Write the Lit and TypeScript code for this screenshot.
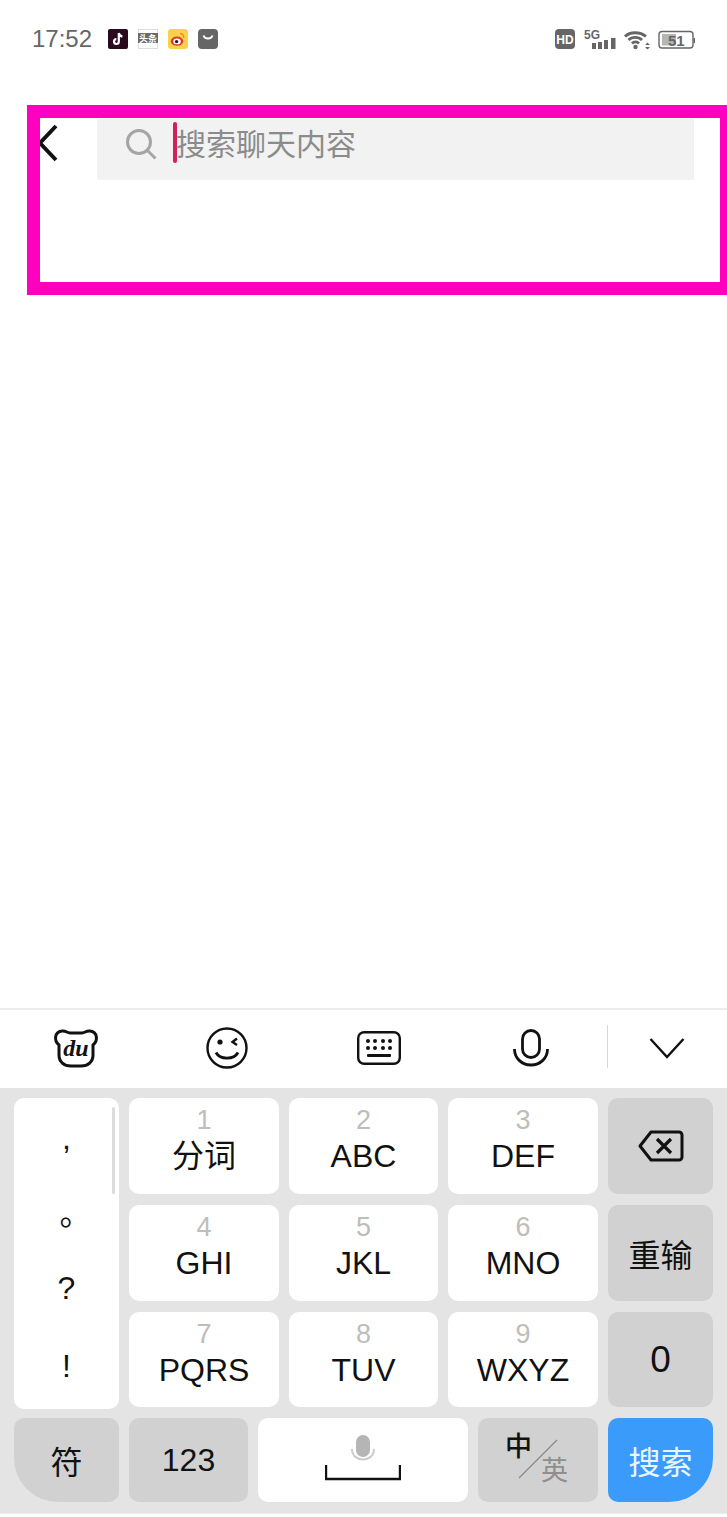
import { LitElement, html, css, svg } from "lit";
import { customElement } from "lit/decorators.js";

const letterKeys = [
  ["1", "分词"],
  ["2", "ABC"],
  ["3", "DEF"],
  ["4", "GHI"],
  ["5", "JKL"],
  ["6", "MNO"],
  ["7", "PQRS"],
  ["8", "TUV"],
  ["9", "WXYZ"],
];

@customElement("app-root")
export class AppRoot extends LitElement {
  static styles = css`
    :host {
      display: block;
      position: relative;
      width: 727px;
      height: 1517px;
      overflow: hidden;
      background: #fff;
      font-family: "Liberation Sans", "Noto Sans CJK SC", sans-serif;
      color: #111;
    }

    .page {
      display: flex;
      flex-direction: column;
      height: 100%;
    }

    .status {
      display: flex;
      align-items: center;
      height: 78px;
      padding: 0 32px;
      box-sizing: border-box;
      color: #666;
    }

    .time {
      font-size: 24px;
      width: 76px;
    }

    .apps {
      display: flex;
      gap: 10px;
    }

    .app {
      width: 20px;
      height: 20px;
      display: block;
    }

    .sys {
      margin-left: auto;
      display: flex;
      align-items: center;
    }

    .search-row {
      display: flex;
      margin-top: 41px;
      height: 61px;
      padding-left: 36px;
      padding-right: 33px;
    }

    .back {
      width: 24px;
      height: 50px;
      margin-right: 37px;
      flex: none;
    }

    .search {
      flex: 1;
      display: flex;
      align-items: center;
      background: #f2f2f2;
      border-radius: 0 0 3px 3px;
      padding-left: 28px;
      padding-bottom: 15px;
      box-sizing: border-box;
    }

    .search svg {
      width: 32px;
      height: 32px;
      flex: none;
      margin-top: 4px;
    }

    .caret {
      width: 4px;
      height: 41px;
      margin-left: 16px;
      margin-right: -1px;
      border-radius: 2px;
      background: #cf1f5c;
      position: relative;
    }

    .placeholder {
      font-size: 30px;
      color: #8b8b8b;
    }

    .spacer {
      flex: 1;
    }

    .toolbar {
      display: grid;
      grid-template-columns: 151px 152px 152px 152px 120px;
      height: 80px;
      box-sizing: border-box;
      border-top: 2px solid #ececec;
      padding-bottom: 2px;
      position: relative;
    }

    .tool {
      display: flex;
      align-items: center;
      justify-content: center;
    }

    .tool svg {
      display: block;
    }

    .divider {
      position: absolute;
      left: 607px;
      top: 15px;
      width: 1px;
      height: 43px;
      background: #d8d8d8;
    }

    .keyboard {
      background: #e4e4e4;
      height: 425px;
      box-sizing: border-box;
      padding: 10px 14px 0;
      display: flex;
      flex-direction: column;
      gap: 11px;
    }

    .footer {
      height: 4px;
      flex: none;
      background: #fff;
      border-top: 1px solid #eee;
      box-sizing: border-box;
    }

    .grid {
      display: grid;
      grid-template-columns: 105px 150px 149px 150px 105px;
      grid-template-rows: 96px 96px 95px;
      column-gap: 10px;
      row-gap: 11px;
      height: 309px;
    }

    .key {
      background: #fff;
      border-radius: 10px;
      display: flex;
      flex-direction: column;
      align-items: center;
      justify-content: center;
    }

    .key.gray {
      background: #d1d1d1;
    }

    .punct {
      grid-row: 1 / span 3;
      position: relative;
      justify-content: stretch;
      padding-top: 5px;
      box-sizing: border-box;
      height: 311px;
    }

    .punct span {
      flex: 1;
      display: flex;
      align-items: center;
      justify-content: center;
      font-size: 32px;
      width: 100%;
      box-sizing: border-box;
    }

    .punct span.dot {
      padding-left: 18px;
      padding-bottom: 6px;
    }

    .punct span.ask {
      padding-bottom: 6px;
    }

    .punct span.bang {
      padding-bottom: 7px;
    }

    .punct .scroll {
      position: absolute;
      left: 98px;
      top: 9px;
      width: 3px;
      height: 87px;
      background: #dcdcdc;
      border-radius: 2px;
      flex: none;
    }

    .num {
      font-size: 27px;
      line-height: 27px;
      color: #bdbdbd;
      margin-top: -5px;
    }

    .label {
      font-size: 32px;
      line-height: 38px;
      margin-top: 3px;
      margin-bottom: 5px;
    }

    .single {
      font-size: 32px;
    }

    .single.zero {
      font-size: 37px;
    }

    .bottom {
      display: grid;
      grid-template-columns: 105px 119px 210px 120px 105px;
      column-gap: 10px;
      height: 84px;
    }

    .fu {
      border-bottom-left-radius: 44px;
    }

    .go {
      background: #3a9bfb;
      color: #e9f5ff;
      border-bottom-right-radius: 44px;
      font-size: 32px;
    }

    .space svg {
      display: block;
    }

    .lang {
      position: relative;
    }

    .zh {
      position: absolute;
      left: 27px;
      top: 13px;
      font-size: 27px;
      line-height: 32px;
      font-weight: 500;
    }

    .en {
      position: absolute;
      left: 63px;
      top: 37px;
      font-size: 27px;
      line-height: 32px;
      color: #8e8e8e;
    }

    .slash {
      position: absolute;
      left: 38px;
      top: 19px;
    }

    .marker {
      position: absolute;
      left: 27px;
      top: 105px;
      width: 713px;
      height: 190px;
      box-sizing: border-box;
      border: 13px solid #ff00bf;
      border-right-width: 20px;
      pointer-events: none;
    }
  `;

  private renderApps() {
    return html`<div class="apps">
      <svg class="app" viewBox="0 0 20 20">
        <rect width="20" height="20" rx="2" fill="#2b0a1e" />
        <path
          d="M10.8 4v8.6a2.4 2.4 0 1 1-2.4-2.4M10.8 4c.3 2 1.600 3.200 3.600 3.400"
          fill="none"
          stroke="#fff"
          stroke-width="2.200"
        />
      </svg>
      <svg class="app" viewBox="0 0 20 20">
        <rect x=".5" y=".5" width="19" height="19" fill="#fff" stroke="#ddd" />
        <rect x="0" y="4" width="20" height="10" fill="#6b6b6b" />
        <text x="10" y="12.500" font-size="9" font-weight="700" fill="#fff" text-anchor="middle">头条</text>
      </svg>
      <svg class="app" viewBox="0 0 20 20">
        <rect width="20" height="20" rx="3" fill="#f8d24a" />
        <ellipse cx="9" cy="12.200" rx="6.200" ry="4.600" fill="#e5352b" />
        <ellipse cx="9" cy="12.400" rx="3.800" ry="2.900" fill="#fff" />
        <circle cx="8.600" cy="12.600" r="1.700" fill="#222" />
        <path d="M12 4.500c2.500 0 4.200 2 3.600 4.500" fill="none" stroke="#e8842b" stroke-width="1.300" />
      </svg>
      <svg class="app" viewBox="0 0 20 20">
        <rect width="20" height="20" rx="4" fill="#666" />
        <path d="M5.500 6.500c1 4 8 4 9 0" fill="none" stroke="#fff" stroke-width="1.800" />
      </svg>
    </div>`;
  }

  private renderSys() {
    return html`<div class="sys">
      <svg width="140" height="30" viewBox="0 0 140 30">
        <rect x="0" y="5" width="20" height="20" rx="4" fill="#666" />
        <text x="10" y="19.500" font-size="12" font-weight="700" fill="#fff" text-anchor="middle"
          font-family="Liberation Sans">HD</text>
        <text x="29" y="15" font-size="12" font-weight="700" fill="#666"
          font-family="Liberation Sans">5G</text>
        <rect x="37" y="19" width="4" height="6" fill="#666" />
        <rect x="43" y="18" width="4" height="7" fill="#666" />
        <rect x="49" y="16" width="4" height="9" fill="#666" />
        <rect x="56" y="14" width="4.500" height="11" fill="#666" />
        <path d="M70 12.500c5-5 15-5 21 0M73.500 16c3.500-3.500 10-3.500 13.500 0M77 19.500c2-2 5-2 7 0"
          fill="none" stroke="#666" stroke-width="2.800" />
        <circle cx="80.500" cy="23" r="2.200" fill="#666" />
        <path d="M90 21l2.500-2.500 2.500 2.500zM90 23l2.500 2.500 2.500-2.500z" fill="#666" />
        <rect x="104" y="7.500" width="34" height="16.500" rx="3" fill="#fff" stroke="#666" stroke-width="1.400" />
        <rect x="107" y="10" width="14" height="11.500" fill="#b5b5b5" />
        <rect x="138.500" y="14" width="1.500" height="5" fill="#666" />
        <text x="113" y="21.500" font-size="15" font-weight="700" fill="#666"
          font-family="Liberation Sans">51</text>
      </svg>
    </div>`;
  }

  private renderToolbar() {
    return html`<div class="toolbar">
      <div class="tool">
        <svg width="46" height="40" viewBox="0 0 46 40">
          <path
            d="M6 17C1 13 1 4 9 3c4-.5 5 2 8 2h12c3 0 4-2.500 8-2 8 1 8 10 3 14v10c0 7-5 11-12 11H18C11 38 6 34 6 27z"
            fill="none"
            stroke="#111"
            stroke-width="3"
          />
          <text x="23" y="28" font-size="24" font-weight="700" font-style="italic" fill="#111"
            text-anchor="middle" font-family="Liberation Serif">du</text>
        </svg>
      </div>
      <div class="tool">
        <svg width="42" height="42" viewBox="0 0 42 42" fill="none" stroke="#111">
          <circle cx="21" cy="21" r="19.500" stroke-width="2.400" />
          <circle cx="14" cy="15" r="2.600" fill="#111" stroke="none" />
          <path d="M31 11.500l-4.500 3.500 4.500 3" stroke-width="2.400" />
          <path d="M10 25.500c4 7.500 18 7.500 22 0" stroke-width="2.800" />
        </svg>
      </div>
      <div class="tool">
        <svg width="44" height="34" viewBox="0 0 44 34" fill="none" stroke="#111">
          <rect x="1.200" y="1.200" width="41.600" height="31.600" rx="6" stroke-width="2.400" />
          <g fill="#111" stroke="none">
            <circle cx="11" cy="10" r="2" /><circle cx="18" cy="10" r="2" />
            <circle cx="26" cy="10" r="2" /><circle cx="33" cy="10" r="2" />
            <circle cx="11" cy="17" r="2" /><circle cx="18" cy="17" r="2" />
            <circle cx="26" cy="17" r="2" /><circle cx="33" cy="17" r="2" />
            <rect x="10" y="23" width="24" height="3" rx="1" />
          </g>
        </svg>
      </div>
      <div class="tool">
        <svg width="36" height="38" viewBox="0 0 36 38" fill="none" stroke="#111" stroke-width="2.800">
          <rect x="9.500" y="1.500" width="17" height="27" rx="8.500" />
          <path d="M1.500 20c0 9 7 16 16.500 16s16.500-7 16.500-16" />
        </svg>
      </div>
      <div class="tool">
        <svg width="36" height="22" viewBox="0 0 36 22" fill="none" stroke="#111" stroke-width="2.400">
          <path d="M1.500 2l16.500 18L34.500 2" />
        </svg>
      </div>
      <div class="divider"></div>
    </div>`;
  }

  private renderBackspace() {
    return svg`<svg width="46" height="32" viewBox="0 0 46 32" fill="none" stroke="#111" stroke-width="3">
      <path d="M13 2h28a3 3 0 0 1 3 3v22a3 3 0 0 1-3 3H13L2 16z" stroke-linejoin="round" />
      <path d="M19 9l14 14M33 9L19 23" stroke-width="3.200" />
    </svg>`;
  }

  render() {
    return html`
      <div class="page">
        <div class="status">
          <span class="time">17:52</span>
          ${this.renderApps()} ${this.renderSys()}
        </div>

        <div class="search-row">
          <svg class="back" viewBox="0 0 24 50" fill="none" stroke="#111" stroke-width="4">
            <path d="M20 7L4 24l16 17" />
          </svg>
          <div class="search">
            <svg viewBox="0 0 32 32" fill="none" stroke="#a5a5a5" stroke-width="3">
              <circle cx="14" cy="14" r="11.500" />
              <path d="M22.500 22.500l8 8" />
            </svg>
            <span class="caret"></span>
            <span class="placeholder">搜索聊天内容</span>
          </div>
        </div>

        <div class="spacer"></div>

        ${this.renderToolbar()}

        <div class="keyboard">
          <div class="grid">
            <div class="key punct">
              <span>,</span><span class="dot">。</span><span class="ask">?</span><span class="bang">!</span>
              <i class="scroll"></i>
            </div>
            ${letterKeys.slice(0, 3).map((k) => this.renderKey(k))}
            <div class="key gray">${this.renderBackspace()}</div>
            ${letterKeys.slice(3, 6).map((k) => this.renderKey(k))}
            <div class="key gray"><span class="single">重输</span></div>
            ${letterKeys.slice(6, 9).map((k) => this.renderKey(k))}
            <div class="key gray"><span class="single zero">0</span></div>
          </div>
          <div class="bottom">
            <div class="key gray fu"><span class="single">符</span></div>
            <div class="key gray"><span class="single">123</span></div>
            <div class="key space">
              <svg width="76" height="50" viewBox="0 0 76 50" fill="none">
                <rect x="31" y="0" width="14" height="22" rx="7" fill="#b5b5b5" />
                <path d="M27 14c0 14 22 14 22 0" stroke="#ccc" stroke-width="2" />
                <path d="M1 30v14h74V30" stroke="#111" stroke-width="2.400" />
              </svg>
            </div>
            <div class="key gray lang">
              <span class="zh">中</span>
              <svg class="slash" width="44" height="44" viewBox="0 0 44 44">
                <path d="M3 41L41 3" stroke="#8e8e8e" stroke-width="1.500" />
              </svg>
              <span class="en">英</span>
            </div>
            <div class="key go">搜索</div>
          </div>
        </div>
        <div class="footer"></div>
      </div>
      <div class="marker"></div>
    `;
  }

  private renderKey(k: string[]) {
    return html`<div class="key">
      <span class="num">${k[0]}</span>
      <span class="label">${k[1]}</span>
    </div>`;
  }
}
